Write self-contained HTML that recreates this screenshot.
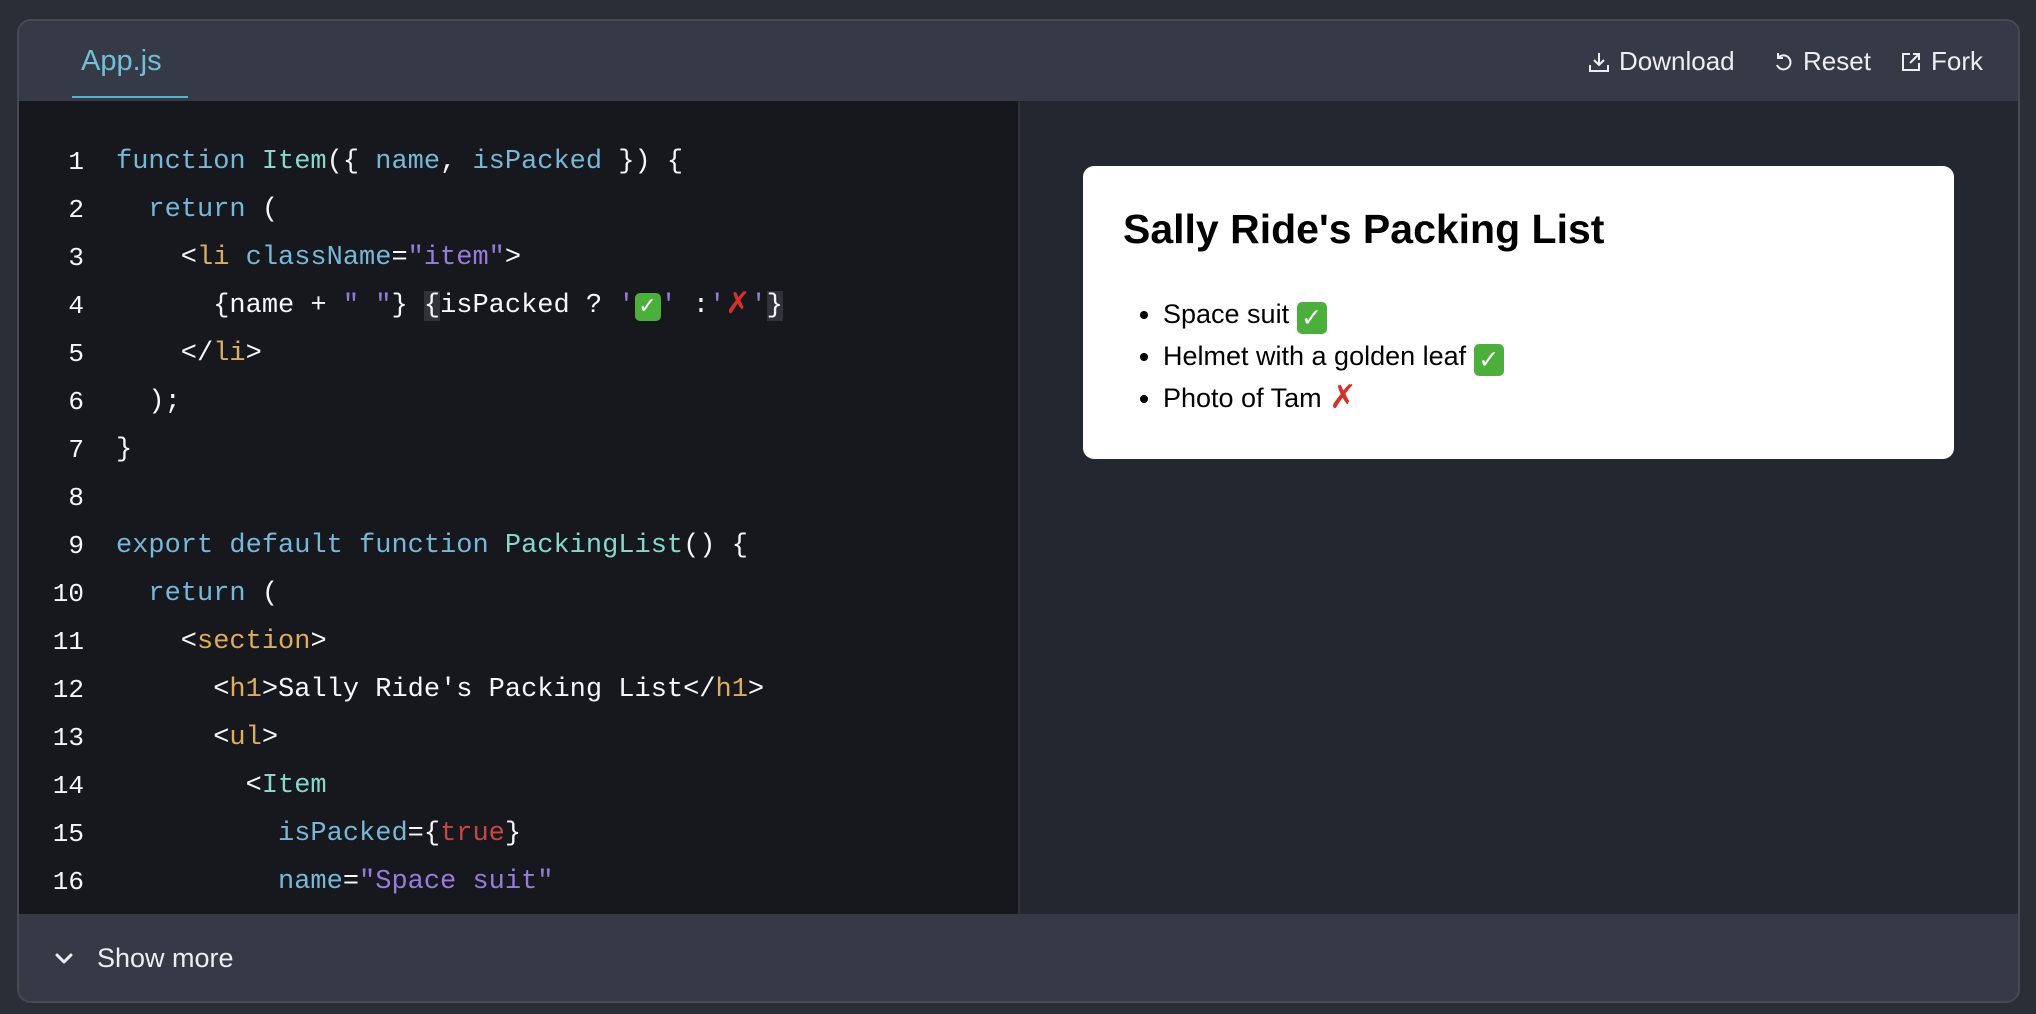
<!DOCTYPE html>
<html><head><meta charset="utf-8"><style>
*{margin:0;padding:0;box-sizing:border-box}
body{width:2036px;height:1014px;background:#2a2e37;position:relative;overflow:hidden;font-family:"Liberation Sans",Arial,sans-serif}
.frame{position:absolute;left:17px;top:19px;width:2003px;height:984px;border:2px solid #454a55;border-radius:14px;overflow:hidden;background:#23272f}
.hdr{position:absolute;left:0;top:0;right:0;height:80px;background:#363a46}
.tab{position:absolute;left:62px;top:24px;font-size:29px;color:#6fbfd8}
.uline{position:absolute;left:53px;top:75px;width:116px;height:2px;background:#58b1cc}
.btn{position:absolute;top:25px;font-size:26px;color:#eceef2;display:flex;align-items:center;gap:8px}
.code{position:absolute;left:0;top:80px;width:999px;height:813px;background:#16181d}
.div{position:absolute;left:999px;top:80px;width:2px;height:813px;background:#2f333c}
.ln{position:absolute;left:0;width:65px;text-align:right;font-family:"Liberation Mono",monospace;font-size:26px;color:#f6f7f9;height:48px;line-height:48px}
.cl{position:absolute;left:97px;white-space:pre;font-family:"Liberation Mono",monospace;font-size:27px;color:#f6f7f9;height:48px;line-height:48px}
.k{color:#77b7d7}.c{color:#86d9ca}.t{color:#dfab5c}.s{color:#977cdc}.r{color:#c64640}
.hl{background:#30333a}
.chk{display:inline-block;width:26px;height:28px;background:#4caf3c;border-radius:5px;color:#fff;font-size:22px;line-height:28px;text-align:center;vertical-align:-1px;font-family:"DejaVu Sans",sans-serif;font-weight:bold}
.x{color:#d6302a;font-weight:bold;font-family:"DejaVu Sans",sans-serif;font-size:30px;line-height:0;vertical-align:-1px}
.card .chk{width:30px;height:32px;line-height:32px;font-size:25px;vertical-align:-3px}
.card .x{font-size:33px}
.bot{position:absolute;left:0;top:893px;right:0;bottom:0;background:#363a46}
.card{position:absolute;left:1064px;top:145px;width:871px;height:293px;background:#fff;border-radius:11px}
.card h1{position:absolute;left:40px;top:40px;font-size:41px;font-weight:bold;color:#000;white-space:nowrap}
.card ul{position:absolute;left:80px;top:127px;font-size:27px;line-height:42px;color:#000}
.card li{height:42px}
</style></head><body>
<div class="frame">
 <div class="hdr">
  <div class="tab">App.js</div><div class="uline"></div>
  <div class="btn" style="left:1568px"><svg width="24" height="24" viewBox="0 0 24 24" fill="none" stroke="#eceef2" stroke-width="2"><path d="M12 3v12M7 10l5 5 5-5M3 15v6h18v-6"/></svg>Download</div>
  <div class="btn" style="left:1752px"><svg width="24" height="24" viewBox="0 0 24 24" fill="none" stroke="#eceef2" stroke-width="2"><path d="M7 8a7 7 0 1 1-1 7"/><path d="M7 3v5h5"/></svg>Reset</div>
  <div class="btn" style="left:1880px"><svg width="24" height="24" viewBox="0 0 24 24" fill="none" stroke="#eceef2" stroke-width="2"><path d="M11 4H4v16h16v-7M14 4h6v6M20 4l-9 9"/></svg>Fork</div>
 </div>
 <div class="code">
  <div class="ln" style="top:37px">1</div><div class="cl" style="top:37px"><span class="k">function</span> <span class="c">Item</span>({ <span class="k">name</span>, <span class="k">isPacked</span> }) {</div>
  <div class="ln" style="top:85px">2</div><div class="cl" style="top:85px">  <span class="k">return</span> (</div>
  <div class="ln" style="top:133px">3</div><div class="cl" style="top:133px">    &lt;<span class="t">li</span> <span class="k">className</span>=<span class="s">"item"</span>&gt;</div>
  <div class="ln" style="top:181px">4</div><div class="cl" style="top:181px">      {name + <span class="s">" "</span>} <span class="hl">{</span>isPacked ? <span class="s">'</span><span class="chk">✓</span><span class="s">'</span> :<span class="s">'</span><span class="x">✗</span><span class="s">'</span><span class="hl">}</span></div>
  <div class="ln" style="top:229px">5</div><div class="cl" style="top:229px">    &lt;/<span class="t">li</span>&gt;</div>
  <div class="ln" style="top:277px">6</div><div class="cl" style="top:277px">  );</div>
  <div class="ln" style="top:325px">7</div><div class="cl" style="top:325px">}</div>
  <div class="ln" style="top:373px">8</div>
  <div class="ln" style="top:421px">9</div><div class="cl" style="top:421px"><span class="k">export</span> <span class="k">default</span> <span class="k">function</span> <span class="c">PackingList</span>() {</div>
  <div class="ln" style="top:469px">10</div><div class="cl" style="top:469px">  <span class="k">return</span> (</div>
  <div class="ln" style="top:517px">11</div><div class="cl" style="top:517px">    &lt;<span class="t">section</span>&gt;</div>
  <div class="ln" style="top:565px">12</div><div class="cl" style="top:565px">      &lt;<span class="t">h1</span>&gt;Sally Ride's Packing List&lt;/<span class="t">h1</span>&gt;</div>
  <div class="ln" style="top:613px">13</div><div class="cl" style="top:613px">      &lt;<span class="t">ul</span>&gt;</div>
  <div class="ln" style="top:661px">14</div><div class="cl" style="top:661px">        &lt;<span class="c">Item</span></div>
  <div class="ln" style="top:709px">15</div><div class="cl" style="top:709px">          <span class="k">isPacked</span>={<span class="r">true</span>}</div>
  <div class="ln" style="top:757px">16</div><div class="cl" style="top:757px">          <span class="k">name</span>=<span class="s">"Space suit"</span></div>
 </div>
 <div class="div"></div>
 <div class="card">
  <h1>Sally Ride's Packing List</h1>
  <ul>
   <li>Space suit <span class="chk">✓</span></li>
   <li>Helmet with a golden leaf <span class="chk">✓</span></li>
   <li>Photo of Tam <span class="x">✗</span></li>
  </ul>
 </div>
 <div class="bot">
  <svg style="position:absolute;left:33px;top:33px" width="24" height="24" viewBox="0 0 24 24" fill="none" stroke="#eceef2" stroke-width="3" stroke-linecap="round" stroke-linejoin="round"><path d="M5 8l7 7 7-7"/></svg>
  <div style="position:absolute;left:78px;top:29px;font-size:27px;color:#eceef2">Show more</div>
 </div>
</div>
</body></html>
